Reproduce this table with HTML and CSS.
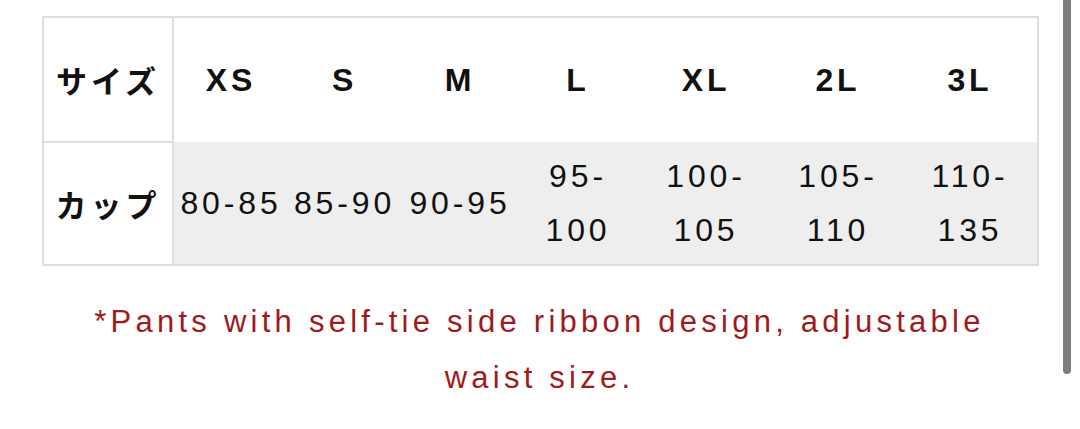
FILE: index.html
```html
<!DOCTYPE html>
<html lang="ja">
<head>
<meta charset="utf-8">
<link rel="stylesheet" href="styles.css">
</head>
<body>
<div class="page">
  <table class="size-table">
    <colgroup>
      <col class="c-label">
      <col class="c-xs">
      <col class="c-s">
      <col class="c-m">
      <col class="c-l">
      <col class="c-xl">
      <col class="c-2l">
      <col class="c-3l">
    </colgroup>
    <tr class="head-row">
      <th class="label">サイズ</th>
      <th>XS</th>
      <th>S</th>
      <th>M</th>
      <th>L</th>
      <th>XL</th>
      <th>2L</th>
      <th>3L</th>
    </tr>
    <tr class="data-row">
      <th class="label">カップ</th>
      <td>80-85</td>
      <td>85-90</td>
      <td>90-95</td>
      <td>95-<br>100</td>
      <td>100-<br>105</td>
      <td>105-<br>110</td>
      <td>110-<br>135</td>
    </tr>
  </table>
  <p class="note">*Pants with self-tie side ribbon design, adjustable waist size.</p>
</div>
<div class="scrollbar"></div>
</body>
</html>
```

FILE: styles.css
```css
html, body {
  margin: 0;
  padding: 0;
  background: #ffffff;
}

body {
  width: 1080px;
  height: 429px;
  overflow: hidden;
  position: relative;
  font-family: "Liberation Sans", Arial, "Noto Sans CJK JP", sans-serif;
  color: #111111;
}

.page {
  padding: 16px 43px 0 42px;
}

.size-table {
  width: 995px;
  table-layout: fixed;
  border-collapse: collapse;
  border: 2px solid #dedede;
  font-size: 32px;
  letter-spacing: 0.12em;
}

.c-label { width: 130px; }
.c-xs { width: 113px; }
.c-s { width: 115px; }
.c-m { width: 116px; }
.c-l { width: 120px; }
.c-xl { width: 136px; }
.c-2l { width: 128px; }
.c-3l { width: 137px; }

.size-table th,
.size-table td {
  padding: 0;
  text-align: center;
  vertical-align: middle;
}

.head-row {
  height: 125px;
}

.head-row th {
  font-weight: bold;
  padding-left: 2px;
}

.label {
  font-family: "Noto Sans CJK JP", sans-serif;
  font-weight: bold;
  font-size: 31px;
  letter-spacing: 0.13em;
  border-right: 2px solid #dedede;
  background: #ffffff;
}

.size-table .label {
  padding-left: 0;
}

.head-row .label {
  border-bottom: 2px solid #dedede;
}

.data-row {
  height: 123px;
}

.data-row td {
  background: #eeeeee;
  font-weight: normal;
  line-height: 54px;
  padding-left: 2px;
}

.note {
  margin: 28px auto 0;
  width: 960px;
  text-align: center;
  color: #a01a1a;
  font-size: 31px;
  line-height: 56px;
  letter-spacing: 0.137em;
}

.scrollbar {
  position: absolute;
  top: 0;
  left: 1063px;
  width: 8px;
  height: 374px;
  background: #7d7d7d;
  border-radius: 0 0 4px 4px;
}
```
